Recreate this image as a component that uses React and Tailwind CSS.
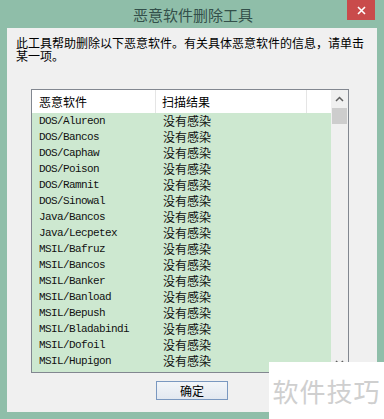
import React from "react";

const ROWS = [
  "DOS/Alureon",
  "DOS/Bancos",
  "DOS/Caphaw",
  "DOS/Poison",
  "DOS/Ramnit",
  "DOS/Sinowal",
  "Java/Bancos",
  "Java/Lecpetex",
  "MSIL/Bafruz",
  "MSIL/Bancos",
  "MSIL/Banker",
  "MSIL/Banload",
  "MSIL/Bepush",
  "MSIL/Bladabindi",
  "MSIL/Dofoil",
  "MSIL/Hupigon",
];

const CJK = { fontFamily: '"Noto Sans CJK SC", "Noto Sans", sans-serif' };

export default function App() {
  return (
    <div className="relative w-[384px] h-[419px] overflow-hidden bg-[#8fbea9]" style={CJK}>
      {/* title bar */}
      <div className="relative h-[28px] flex items-center justify-center">
        <span className="text-[15px] leading-none text-[#33504a] pl-[2px]">恶意软件删除工具</span>
        <div className="absolute top-0 left-[347px] w-[28px] h-[20px] bg-[#c94b4b] flex items-center justify-center">
          <svg width="9" height="9" viewBox="0 0 9 9">
            <path d="M1 1L8 8M8 1L1 8" stroke="#fff" strokeWidth="1.6" />
          </svg>
        </div>
      </div>

      {/* client area */}
      <div className="ml-[7px] w-[370px] h-[384px] bg-[#f0f0f0] flex flex-col">
        <p className="pl-[9px] pt-[8px] text-[12px] leading-[13px] text-black">
          此工具帮助删除以下恶意软件。有关具体恶意软件的信息，请单击
          <br />
          某一项。
        </p>

        {/* list box */}
        <div className="ml-[24px] mt-[27px] w-[318px] h-[284px] border border-[#828790] bg-white flex">
          <div className="flex-1 flex flex-col">
            <div className="h-[23px] flex items-center text-[12px] text-black bg-white">
              <div className="w-[124px] h-full pl-[7px] flex items-center border-r border-[#e5e5e5]">恶意软件</div>
              <div className="w-[151px] h-full pl-[6px] flex items-center border-r border-[#e5e5e5]">扫描结果</div>
            </div>
            <div className="flex-1 bg-[#cde8d0]">
              {ROWS.map((r) => (
                <div key={r} className="h-[16px] flex items-center">
                  <span
                    className="w-[131px] pl-[7px] text-[11px] tracking-[-0.6px] text-[#111]"
                    style={{ fontFamily: '"Liberation Mono", "DejaVu Sans Mono", monospace' }}
                  >
                    {r}
                  </span>
                  <span className="text-[12px] text-[#111]">没有感染</span>
                </div>
              ))}
            </div>
          </div>
          {/* scrollbar */}
          <div className="w-[17px] bg-[#f0f0f0] flex flex-col items-center">
            <div className="h-[18px] flex items-center justify-center">
              <svg width="9" height="6" viewBox="0 0 9 6">
                <path d="M1 5L4.5 1.5L8 5" stroke="#606060" strokeWidth="1.5" fill="none" />
              </svg>
            </div>
            <div className="w-[15px] h-[16px] bg-[#cdcdcd]" />
            <div className="flex-1" />
            <div className="h-[18px] flex items-center justify-center">
              <svg width="9" height="6" viewBox="0 0 9 6">
                <path d="M1 1L4.5 4.5L8 1" stroke="#606060" strokeWidth="1.5" fill="none" />
              </svg>
            </div>
          </div>
        </div>

        <div className="mt-[8px] flex">
          <button className="ml-[149px] w-[72px] h-[19px] border border-[#7a98c0] bg-gradient-to-b from-[#f2f5f9] to-[#e2e8f0] text-[12px] leading-none text-black flex items-center justify-center">
            确定
          </button>
        </div>
      </div>

      {/* watermark */}
      <div className="absolute left-[269px] top-[362px] w-[115px] h-[57px] bg-white flex items-center justify-center">
        <span className="text-[26px] leading-none text-[#cfcfcf] tracking-[1px]">软件技巧</span>
      </div>
    </div>
  );
}
